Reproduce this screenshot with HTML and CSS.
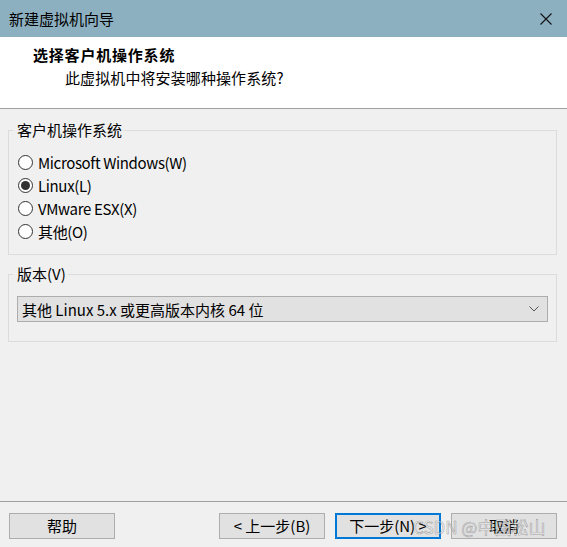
FILE: index.html
```html
<!DOCTYPE html>
<html lang="zh-CN">
<head>
<meta charset="utf-8">
<title>新建虚拟机向导</title>
<link rel="stylesheet" href="styles.css">
</head>
<body>
<div class="dialog">
  <div class="titlebar">
    <span class="title">新建虚拟机向导</span>
    <svg class="close" width="12" height="12" viewBox="0 0 12 12"><path d="M0.5 0.5 L11.5 11.5 M11.5 0.5 L0.5 11.5" stroke="#111" stroke-width="1.1" fill="none"/></svg>
  </div>
  <div class="header">
    <div class="heading">选择客户机操作系统</div>
    <div class="sub">此虚拟机中将安装哪种操作系统?</div>
  </div>
  <div class="main">
    <fieldset class="group group-os">
      <legend>客户机操作系统</legend>
      <div class="radios">
        <label class="radio"><input type="radio" name="os"><span>Microsoft Windows(W)</span></label>
        <label class="radio"><input type="radio" name="os" checked><span>Linux(L)</span></label>
        <label class="radio"><input type="radio" name="os"><span>VMware ESX(X)</span></label>
        <label class="radio"><input type="radio" name="os"><span>其他(O)</span></label>
      </div>
    </fieldset>
    <fieldset class="group group-ver">
      <legend>版本(V)</legend>
      <div class="select">
        <span>其他 Linux 5.x 或更高版本内核 64 位</span>
        <svg class="chev" width="10" height="6" viewBox="0 0 10 6"><path d="M0.5 0.5 L5 5 L9.5 0.5" stroke="#555" stroke-width="1" fill="none"/></svg>
      </div>
    </fieldset>
  </div>
  <div class="footer">
    <button class="btn">帮助</button>
    <div class="spacer"></div>
    <button class="btn">&lt; 上一步(B)</button>
    <button class="btn primary">下一步(N) &gt;</button>
    <button class="btn">取消</button>
    <span class="watermark">CSDN @中国松山</span>
  </div>
</div>
</body>
</html>
```
FILE: styles.css
```css
* { box-sizing: border-box; }
html, body { margin: 0; padding: 0; }
body {
  width: 567px;
  height: 547px;
  background: #f0f0f0;
  font-family: "Noto Sans CJK SC", "Noto Sans", sans-serif;
  font-size: 15px;
  color: #000;
  overflow: hidden;
}
.dialog {
  width: 567px;
  height: 547px;
  display: flex;
  flex-direction: column;
}
.titlebar {
  height: 37px;
  background: #8db0c1;
  display: flex;
  align-items: center;
  justify-content: space-between;
  padding: 0 15px 0 9px;
}
.title { line-height: 20px; }
.close { display: block; }
.header {
  height: 72px;
  background: #fff;
  border-bottom: 1px solid #a0a0a0;
  padding: 8px 0 0 33px;
}
.heading {
  font-weight: bold;
  line-height: 20px;
  letter-spacing: 0.8px;
}
.sub {
  margin-top: 3px;
  padding-left: 32px;
  line-height: 20px;
  letter-spacing: 0.1px;
}
.main {
  flex: 1;
  padding: 11px 10px 0 8px;
}
.group {
  margin: 0;
  padding: 0 8px 0 4px;
  border: 1px solid #dcdcdc;
  min-width: 0;
}
.group legend {
  padding: 0 2px 0 4px;
  line-height: 20px;
}
.group-os { height: 135px; }
.radios {
  padding: 11px 0 0 5px;
  display: flex;
  flex-direction: column;
}
.radio {
  height: 23px;
  display: flex;
  align-items: center;
  gap: 5px;
  letter-spacing: -0.35px;
}
.radio input {
  appearance: none;
  -webkit-appearance: none;
  margin: 0;
  width: 15px;
  height: 15px;
  border: 1px solid #333;
  border-radius: 50%;
  background: #fff;
  display: grid;
  place-items: center;
}
.radio input:checked::after {
  content: "";
  width: 9px;
  height: 9px;
  border-radius: 50%;
  background: #333;
}
.group-ver {
  margin-top: 9px;
  height: 78px;
}
.select {
  margin: 12px 0 0 4px;
  height: 26px;
  background: #e1e1e1;
  border: 1px solid #adadad;
  display: flex;
  align-items: center;
  justify-content: space-between;
  padding: 0 8px 0 4px;
}
.chev { display: block; }
.footer {
  height: 46px;
  border-top: 1px solid #a0a0a0;
  display: flex;
  align-items: flex-start;
  padding: 11px 10px 0 9px;
  gap: 10px;
  position: relative;
}
.spacer { flex: 1; }
.btn {
  width: 106px;
  height: 26px;
  background: #e1e1e1;
  border: 1px solid #adadad;
  font-family: inherit;
  font-size: 15px;
  color: #000;
  padding: 0;
  line-height: 20px;
}
.btn.primary { border: 2px solid #0078d7; }
.watermark {
  position: absolute;
  left: 413px;
  top: 15px;
  font-size: 17px;
  line-height: 20px;
  color: rgba(255,255,255,0.55);
  -webkit-text-stroke: 0.6px rgba(90,90,90,0.5);
  pointer-events: none;
  white-space: nowrap;
}
```
